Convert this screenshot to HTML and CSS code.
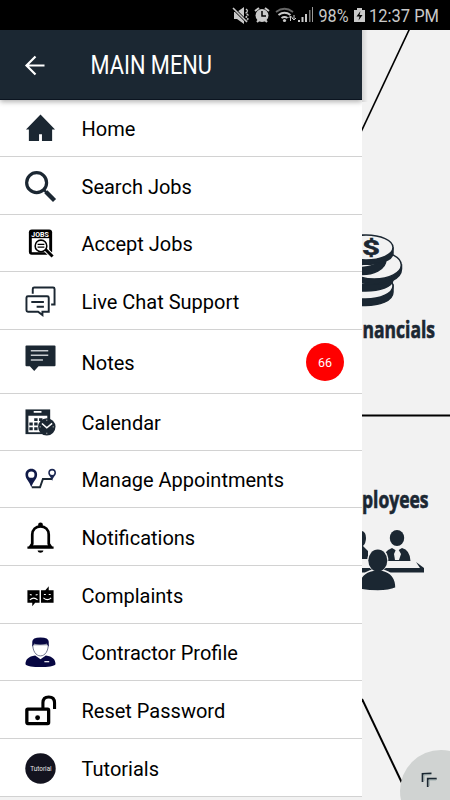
FILE: index.html
```html
<!DOCTYPE html>
<html lang="en">
<head>
<meta charset="utf-8">
<title>Main Menu</title>
<link rel="stylesheet" href="styles.css">
</head>
<body>
<header class="status">
  <svg width="220" height="30" viewBox="0 0 220 30">
    <g fill="#c9c9c9">
      <path d="M4 12h3l7-5v17l-7-5H4z"/>
      <path d="M3 8l14 14" stroke="#000" stroke-width="3"/>
      <path d="M3 8l14 14" stroke="#c9c9c9" stroke-width="1.6"/>
      <path d="M16 9l2 2-2 2 2 2-2 2 2 2-2 2" stroke="#c9c9c9" stroke-width="1.3" stroke-dasharray="2.5 .8" fill="none"/>
      <circle cx="32" cy="15.500" r="6.500"/>
      <path d="M25 11l4-3M39 11l-4-3M27 22l2-2M37 22l-2-2" stroke="#c9c9c9" stroke-width="2"/>
      <path d="M32 11v5h4" fill="none" stroke="#000" stroke-width="1.500"/>
      <path d="M46 12q8.500-6.500 17 0" fill="none" stroke="#666" stroke-width="1.800"/>
      <path d="M48.500 15q6-4.500 12 0M51.500 18q3-2 6 0" fill="none" stroke="#c9c9c9" stroke-width="2"/>
      <circle cx="54.500" cy="20.500" r="1.600"/>
      <path d="M60.500 21v-5m-2 2l2-2 2 2M64 15v5m-2-2l2 2 2-2" stroke="#c9c9c9" fill="none"/>
      <path d="M68 20h2v2h-2zM71.500 17h2v5h-2zM75 14h2v8h-2z"/>
      <path d="M79 10h1.500v12H79z" fill="#777"/><path d="M82 7h1v15h-1z" fill="#999"/>
      <path d="M124 10h3V8h5v2h3v12h-11z"/>
      <path d="M130.500 11l-4 5.500h3l-1 4 4-5.500h-3z" fill="#000"/>
      <text x="88.500" y="22" font-size="19" textLength="30" lengthAdjust="spacingAndGlyphs">98%</text>
      <text x="139" y="22" font-size="19" textLength="70" lengthAdjust="spacingAndGlyphs">12:37 PM</text>
    </g>
  </svg>
</header>
<main class="stage">
  <section class="drawer">
    <div class="bar">
      <svg class="back" width="24" height="24" viewBox="0 0 24 24"><path d="M21.500 12.500H3.500M12.500 3.500l-9 9 9 9" fill="none" stroke="#fff" stroke-width="2.200"/></svg>
      <svg class="title" width="130" height="30" viewBox="0 0 130 30"><text x="-.5" y="24" font-size="25" fill="#fff" textLength="121.500" lengthAdjust="spacingAndGlyphs">MAIN MENU</text></svg>
    </div>
    <nav class="menu">
      <a class="row short"><svg class="icon" viewBox="0 0 32 32"><path d="M16 1.500L31 17h-3v12H17.500v-7h-3v7H4V17H1z" fill="#1b2732"/></svg><span>Home</span></a>
      <a class="row"><svg class="icon" viewBox="0 0 32 32"><g fill="none" stroke="#1b2732"><circle cx="12" cy="12" r="10.300" stroke-width="3.300"/><path d="M19 19l3 3" stroke-width="2.500"/><path d="M21.500 21.500l9 9" stroke-width="4.500"/></g></svg><span>Search Jobs</span></a>
      <a class="row short"><svg class="icon" viewBox="0 0 32 32"><rect x="4" y="1.500" width="24" height="26" rx="3"/><path d="M7 10.500h18V25H7z" fill="#fff"/><text x="6.500" y="9" font-size="6.500" font-weight="700" fill="#fff" textLength="18" lengthAdjust="spacingAndGlyphs">JOBS</text><circle cx="16.500" cy="18.500" r="6" fill="#fff" stroke="#000" stroke-width="1.600"/><path d="M13 16.800h7M13 19.700h7" stroke="#000" stroke-width="1.300"/><path d="M22 23l6.500 6.500" stroke="#fff" stroke-width="5"/><path d="M21 22l7.500 7.500" stroke="#000" stroke-width="3"/></svg><span>Accept Jobs</span></a>
      <a class="row"><svg class="icon" viewBox="0 0 32 32"><g fill="none" stroke="#1b2732" stroke-width="2"><path d="M8 8V3q0-1.500 1.500-1.500H29q1.500 0 1.500 1.500v16H27"/><path d="M3 10.500h20q1.500 0 1.500 1.500v14.500H18v3.500l-4.500-3.500H3q-1.500 0-1.500-1.500V12q0-1.500 1.500-1.500z"/><path d="M6.500 16.500h13M12 21.500h7.500"/></g></svg><span>Live Chat Support</span></a>
      <a class="row tall"><svg class="icon lift" viewBox="0 0 32 32"><path d="M2 3.500h28.500q1 0 1 1V24q0 1-1 1H14l-4.500 5L5 25H1.500q-1 0-1-1V4.500q0-1 1-1z" fill="#1b2732"/><path d="M6 9h18M6 13.700h18M6 18.500h12.500" stroke="#c8ccd0" stroke-width="1.500"/></svg><span>Notes</span><b class="badge">66</b></a>
      <a class="row short"><svg class="icon" viewBox="0 0 32 32"><path d="M.5 2.500H26V28H.5z" fill="#1b2732"/><path d="M9 4h8v2H9zM3.500 9H23v17H3.500z" fill="#fff"/><path d="M9.500 11.500h3.500v3H9.500zM14.500 11.500H18v3h-3.500zM4.500 16H8v3H4.500zM9.500 16H13v3H9.500zM4.500 21H8v3H4.500zM9.500 21H13v3H9.500z" fill="#1b2732"/><circle cx="22.500" cy="20.500" r="9" fill="#1b2732"/><path d="M17.500 17l5 4.500 5.500-4.500" fill="none" stroke="#fff" stroke-width="1.600"/><path d="M22.500 13v1.500M22.500 26.500V28M15 20.500h1.500M28.500 20.500H30" stroke="#aaa"/></svg><span>Calendar</span></a>
      <a class="row short"><svg class="icon" viewBox="0 0 32 32"><path d="M7 24h8.500l3-8.500H28" fill="none" stroke="#1b2732" stroke-width="2"/><path d="M6.500 5C2.800 5 .5 7.500.5 11c0 4.500 4 6.500 6 13 2-6.500 6-8.500 6-13 0-3.500-2.300-6-6-6z" fill="#101a48"/><circle cx="6.500" cy="11" r="3.300" fill="#fff"/><path d="M28 5c-2.300 0-4 1.600-4 4 0 3 3 4 4 8.500 1-4.500 4-5.500 4-8.500 0-2.400-1.700-4-4-4z" fill="#1b2752"/><circle cx="28" cy="9" r="2.400" fill="#fff"/></svg><span>Manage Appointments</span></a>
      <a class="row"><svg class="icon" viewBox="0 0 32 32"><path d="M16 4.500c-5 0-8.500 3.500-8.500 8.500v9.500l-2 3h21l-2-3V13c0-5-3.500-8.500-8.500-8.500z" fill="none" stroke="#000" stroke-width="2.800"/><path d="M2.500 25.200h27v2.300h-27zM13 29.500h6c-.5 3-5.500 3-6 0z"/><circle cx="16" cy="3" r="2.500"/></svg><span>Notifications</span></a>
      <a class="row"><svg class="icon" viewBox="0 0 32 32"><path d="M2.500 10.500H15v13h-4.500L7.500 27v-3.500h-5zM16.500 10.500H21l3.500-4v4h5v13h-13z"/><g fill="none" stroke="#fff" stroke-width="1.100"><path d="M5 20.500q4-3.500 8 0M19 18.500q4 3.500 8 0M5 15l2 .5M11 15.500l2-.5M19.500 15h2M24.500 15h2"/></g></svg><span>Complaints</span></a>
      <a class="row short"><svg class="icon" viewBox="0 0 32 32"><path d="M.5 28c0-5 3-8 10-9l5.500 4 5.500-4c7 1 10 4 10 9-2 4-29 4-31 0z" fill="#070742"/><path d="M8 8c0 6 3 11.500 8 11.500S24 14 24 8z" fill="#fff" stroke="#5b607d" stroke-width=".9"/><path d="M7.500 10V5q0-4.500 8.500-4.500T24.500 5v5l-2-3q-7 1.500-13 0z" fill="#070742"/><path d="M20 25.500h5" stroke="#fff" stroke-width="1.200"/></svg><span>Contractor Profile</span></a>
      <a class="row"><svg class="icon" viewBox="0 0 32 32"><rect x="1.900" y="14.500" width="22.500" height="15" rx="1" fill="none" stroke="#000" stroke-width="3.400"/><path d="M18.500 14V8q0-6 6-6t6 6v6.500" fill="none" stroke="#000" stroke-width="3.200"/><circle cx="13" cy="23.500" r="2.500"/></svg><span>Reset Password</span></a>
      <a class="row"><svg class="icon" viewBox="0 0 32 32"><circle cx="16" cy="16" r="15.700" fill="#13131f"/><text x="5.500" y="18.300" font-size="6.500" fill="#e8e8e8" textLength="22" lengthAdjust="spacingAndGlyphs">Tutorial</text></svg><span>Tutorials</span></a>
    </nav>
  </section>
  <svg class="backdrop" width="88" height="770" viewBox="362 30 88 770">
    <defs><linearGradient id="edge"><stop offset="0" stop-color="#000" stop-opacity=".12"/><stop offset="1" stop-color="#000" stop-opacity="0"/></linearGradient></defs>
    <rect x="362" y="30" width="6" height="72" fill="url(#edge)"/>
    <g stroke="#000"><path d="M409.500 29L361 132" stroke-width="1.600"/><path d="M362 415.500h88" stroke-width="2"/><path d="M362 699l40 84" stroke-width="2"/></g>
    <g fill="#f2f2f2" stroke="#1b2732" stroke-width="1.500">
      <path d="M338 286v6c0 18 55 18 55 0v-7z" fill="#1b2732"/>
      <ellipse cx="365.500" cy="286" rx="27.500" ry="13"/>
      <path d="M338 274v5c0 16 55 16 55 0v-6z" fill="#1b2732"/>
      <ellipse cx="365.500" cy="272" rx="27.500" ry="12.500"/>
      <path d="M347 265v4c0 20 54 20 54.500 0v-4z" fill="#1b2732"/>
      <ellipse cx="374.300" cy="265" rx="27" ry="14"/>
      <path d="M333 257c0 22 53 24 53 2" fill="#1b2732"/>
      <path d="M362 266q11-1 19-6" fill="none" stroke="#f2f2f2"/>
      <path d="M338 248v5c0 15 55 15 55 0v-5z" fill="#1b2732"/>
      <ellipse cx="366" cy="247.500" rx="27" ry="12.500"/>
    </g>
    <text x="362" y="254.500" font-size="21" font-weight="700" fill="#1b2732" stroke="#1b2732" stroke-width=".5" textLength="18" lengthAdjust="spacingAndGlyphs">$</text>
    <g class="label" fill="#1b2732" stroke="#1b2732" stroke-width=".7">
      <text x="362.500" y="337.500" textLength="72.500" lengthAdjust="spacingAndGlyphs">nancials</text>
      <text x="362" y="508" textLength="66.500" lengthAdjust="spacingAndGlyphs">ployees</text>
    </g>
    <g fill="#1b2732">
      <path d="M362 531q4 1 4 7 0 5-3 8l5 5v8h-6z"/>
      <ellipse cx="397" cy="538" rx="7.200" ry="8"/>
      <path d="M383 561q0-10 9-13l5 3 5-3q8 2 8.500 13z"/>
      <path d="M397 547l-3 7 1 6h4l2-6z" fill="#f2f2f2"/>
      <path d="M362 568h62v4.500h-62z"/><path d="M416 562l8 6h-4z"/>
      <path d="M362 565h52v2h-52z" fill="#f2f2f2"/>
      <ellipse cx="377.800" cy="560" rx="10.500" ry="12" fill="#f2f2f2"/>
      <path d="M359 589q-1-14 11-18l4-1h8q14 3 14 18-7 3-18 3t-19-2z" stroke="#f2f2f2" stroke-width="1.500"/>
      <ellipse cx="377.800" cy="560.500" rx="9.500" ry="11"/>
    </g>
    <ellipse cx="441" cy="791" rx="41" ry="41" fill="#d0d3d2"/>
    <g fill="none" stroke="#1b2732" stroke-width="1.700"><path d="M422.500 782v-8.300l9-.4"/><path d="M427.700 787v-8.300h9"/></g>
    <g fill="none" stroke="#8fa3a3" stroke-width=".8"><path d="M424 781v-6l7-.3M429.200 786v-6h7"/></g>
  </svg>
</main>
</body>
</html>
```

FILE: styles.css
```css
* { box-sizing: border-box; }
body { margin: 0; width: 450px; height: 800px; overflow: hidden; background: #f2f2f2; font-family: Roboto, "Liberation Sans", sans-serif; color: #000; }
svg { display: block; flex: none; }
.status { height: 30px; background: #000; display: flex; justify-content: flex-end; }
.stage { display: flex; height: 770px; }
.drawer { width: 362px; flex: none; background: #f2f2f2; }
.bar { height: 70px; background: #1b2732; border-bottom: 1px solid #0b1420; display: flex; align-items: center; padding-left: 23px; position: relative; box-shadow: 0 2px 5px rgba(0, 0, 0, .3); clip-path: inset(0 0 -9px 0); }
.title { margin-left: 44px; margin-top: 1px; overflow: visible; }
.menu { display: flex; flex-direction: column; }
.row { height: 58px; flex: none; display: flex; align-items: center; background: #fff; border-bottom: 1px solid #d2d2d2; padding: 1px 18px 0 25px; font-size: 20px; }
.row.short { height: 57px; }
.row.tall { height: 64px; }
.row span { padding-top: 1px; }
.icon { width: 31px; height: 31px; margin-right: 25.5px; overflow: visible; }
.lift { margin-top: -9px; }
.badge { width: 38px; height: 38px; margin-left: auto; border-radius: 50%; background: #f00; color: #fff; font-size: 12.5px; font-weight: 400; display: flex; align-items: center; justify-content: center; }
.backdrop { background: #f2f2f2; }
.label { font-family: "Open Sans", "Noto Sans", sans-serif; font-size: 24px; font-weight: 700; }
```
